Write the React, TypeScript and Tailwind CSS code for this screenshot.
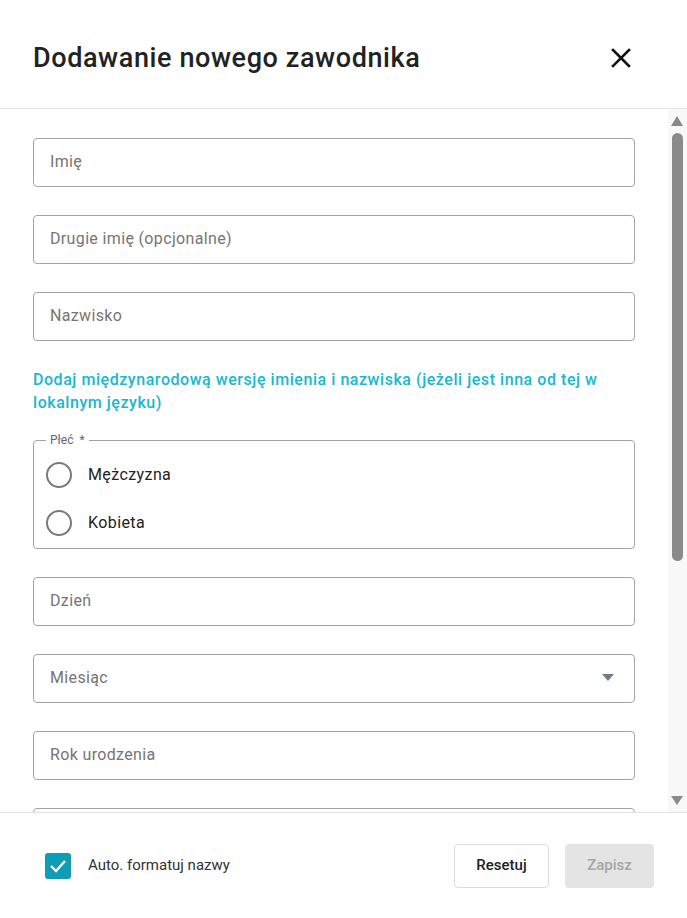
import React from "react";

function Field({ label, select }: { label?: string; select?: boolean }) {
  return (
    <div className="flex h-[49px] items-center justify-between rounded-[4px] border border-[#a3a3a3] pb-[2px] pl-[16px] pr-[20px]">
      <span className="text-[16px] tracking-[0.35px] text-[#757575]">{label}</span>
      {select && (
        <svg width="12" height="7" viewBox="0 0 12 7">
          <path d="M0 0 L12 0 L6 7 Z" fill="#6e7b88" />
        </svg>
      )}
    </div>
  );
}

function Radio({ label }: { label: string }) {
  return (
    <div className="flex h-[48px] items-center">
      <div className="h-[26px] w-[26px] rounded-full border-2 border-[#7a7a7a]" />
      <span className="ml-[16px] text-[16px] tracking-[0.4px] text-[#222]">{label}</span>
    </div>
  );
}

export default function App() {
  return (
    <div className="flex h-[918px] w-[687px] flex-col bg-white" style={{ fontFamily: "Roboto, 'Noto Sans', sans-serif" }}>
      <div className="flex h-[109px] shrink-0 items-center justify-between border-b border-[#e3e3e3] pl-[33px] pr-[56px] pt-[8px]">
        <h1 className="text-[27px] font-medium tracking-[0.6px] text-[#222]">Dodawanie nowego zawodnika</h1>
        <svg width="20" height="20" viewBox="0 0 20 20">
          <path d="M2 2 L18 18 M18 2 L2 18" stroke="#111" strokeWidth="2.6" strokeLinecap="square" />
        </svg>
      </div>
      <div className="flex h-[703px] shrink-0">
        <div className="flex-1 overflow-hidden px-[33px] pt-[29px]">
          <div className="flex flex-col">
            <Field label="Imię" />
            <div className="mt-[28px]"><Field label="Drugie imię (opcjonalne)" /></div>
            <div className="mt-[28px]"><Field label="Nazwisko" /></div>
            <p className="mt-[27px] text-[16px] font-medium leading-[23px] tracking-[0.55px] text-[#16b8d2]">
              Dodaj międzynarodową wersję imienia i nazwiska (jeżeli jest inna od tej w lokalnym języku)
            </p>
            <div className="relative mt-[26px] h-[109px] rounded-[4px] border border-[#a3a3a3] pl-[12px] pt-[10px]">
              <span className="absolute left-[12px] top-[-8px] bg-white px-[4px] text-[12px] leading-[14px] text-[#666]">Płeć&nbsp;&nbsp;*</span>
              <Radio label="Mężczyzna" />
              <Radio label="Kobieta" />
            </div>
            <div className="mt-[28px]"><Field label="Dzień" /></div>
            <div className="mt-[28px]"><Field label="Miesiąc" select /></div>
            <div className="mt-[28px]"><Field label="Rok urodzenia" /></div>
            <div className="mt-[28px]"><Field /></div>
          </div>
        </div>
        <div className="flex w-[19px] shrink-0 flex-col items-center bg-[#f8f8f8] pr-[1px]">
          <svg className="mt-[7px]" width="12" height="10" viewBox="0 0 12 10">
            <path d="M6 0 L12 10 L0 10 Z" fill="#8a8a8a" />
          </svg>
          <div className="mt-[7px] h-[428px] w-[11px] rounded-full bg-[#8a8a8a]" />
          <div className="flex-1" />
          <svg className="mb-[7px]" width="12" height="9" viewBox="0 0 12 9">
            <path d="M0 0 L12 0 L6 9 Z" fill="#8a8a8a" />
          </svg>
        </div>
      </div>
      <div className="flex h-[106px] shrink-0 items-center justify-between border-t border-[#e3e3e3] pl-[45px] pr-[33px]">
        <div className="flex items-center">
          <div className="flex h-[26px] w-[26px] items-center justify-center rounded-[3px] bg-[#0e9db4]">
            <svg width="18" height="14" viewBox="0 0 18 14">
              <path d="M2 7 L7 12 L16 2" stroke="#fff" strokeWidth="2.4" fill="none" />
            </svg>
          </div>
          <span className="ml-[17px] text-[15px] text-[#333]">Auto. formatuj nazwy</span>
        </div>
        <div className="flex items-center gap-[16px]">
          <button className="h-[44px] w-[95px] rounded-[4px] border border-[#dcdcdc] bg-white text-[15px] font-medium text-[#222]">Resetuj</button>
          <button className="h-[44px] w-[89px] rounded-[4px] bg-[#e4e4e4] text-[15px] font-medium text-[#a5a5a5]">Zapisz</button>
        </div>
      </div>
    </div>
  );
}
